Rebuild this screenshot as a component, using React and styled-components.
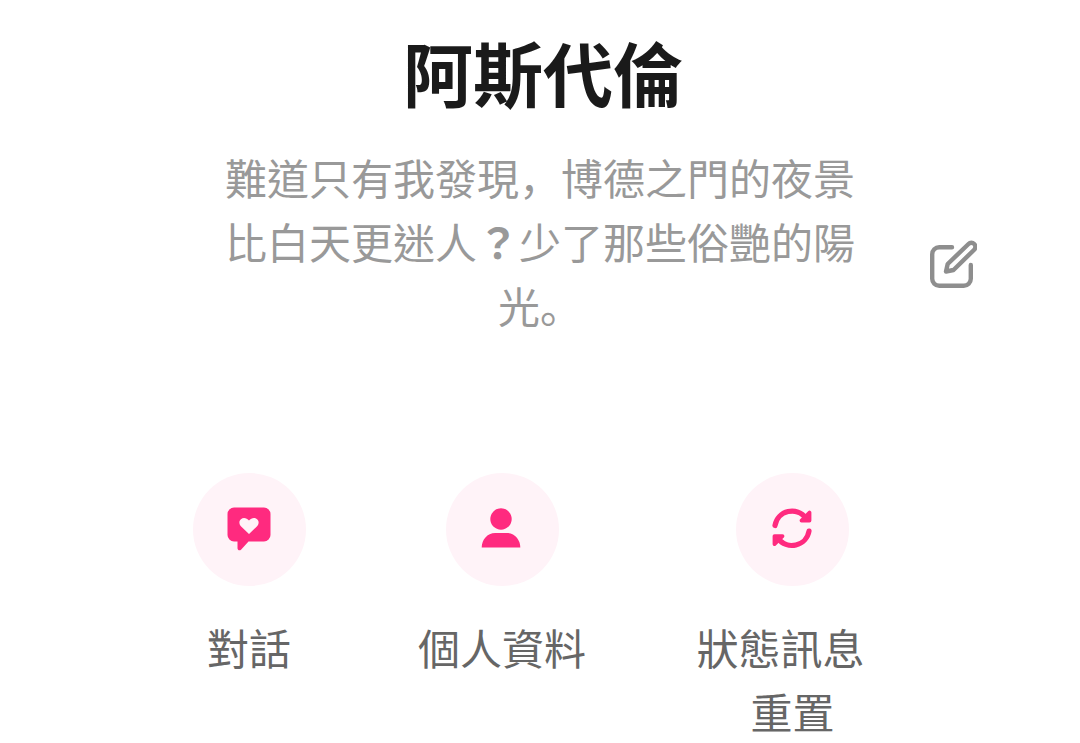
import React from "react";
import styled, { createGlobalStyle } from "styled-components";

const GlobalStyle = createGlobalStyle`
  html, body {
    margin: 0;
    height: 100%;
    background: #fff;
    overflow: hidden;
  }
  body {
    font-family: "Noto Sans CJK TC", "Noto Sans", sans-serif;
  }
`;

function HeartChatIcon() {
  return (
    <svg width="44" height="45" viewBox="0 0 44 45">
      <path
        fill="#ff2a7f"
        d="M7 0.500h30a6.500 6.500 0 0 1 6.500 6.500v21a6.500 6.500 0 0 1-6.500 6.500H21.500l-7.500 8.200c-1.300 1.300-3.500 0.600-3.500-1.400v-6.800H7A6.500 6.500 0 0 1 0.500 28V7A6.500 6.500 0 0 1 7 0.500z"
      />
      <path
        fill="#fff3f8"
        d="M22 27l-7.600-7.200c-2.600-2.500-2.600-5.700-0.500-7.500 2.400-2 5.800-1.400 8.100 1.300 2.300-2.700 5.700-3.300 8.100-1.300 2.100 1.800 2.100 5-0.500 7.500z"
      />
    </svg>
  );
}

function PersonIcon() {
  return (
    <svg width="43" height="44" viewBox="0 0 43 44">
      <circle cx="20" cy="11" r="10.700" fill="#ff2a7f" />
      <path fill="#ff2a7f" d="M0.700 39.500c0-7.500 5.500-14.500 13.500-14.500h11.600c8 0 13.500 7 13.500 14.500z" />
    </svg>
  );
}

function RefreshIcon() {
  return (
    <svg width="44" height="44" viewBox="0 0 44 44" fill="none" stroke="#ff2a7f" strokeWidth="5.200" strokeLinecap="round" strokeLinejoin="round">
      <g>
        <path d="M4 17.500A17.300 17.300 0 0 1 35 10.200" />
        <path d="M38.500 4.500V12.500H30.500Z" fill="#ff2a7f" strokeWidth="3.800" />
      </g>
      <g transform="rotate(180 21 20.300)">
        <path d="M4 17.500A17.300 17.300 0 0 1 35 10.200" />
        <path d="M38.500 4.500V12.500H30.500Z" fill="#ff2a7f" strokeWidth="3.800" />
      </g>
    </svg>
  );
}

function EditIcon() {
  return (
    <svg width="48" height="50" viewBox="0 0 48 50" fill="none" stroke="#8e8e8e" strokeWidth="4.400" strokeLinecap="round" strokeLinejoin="round">
      <path d="M23 8.200H10.200a7 7 0 0 0-7 7v24.600a7 7 0 0 0 7 7h24.600a7 7 0 0 0 7-7V26" />
      <path d="M39.500 5a4 4 0 0 1 5.700 5.700L24.500 31l-7.500 1.500 1.700-7.500z" />
    </svg>
  );
}

export default function App() {
  return (
    <Page>
      <GlobalStyle />
      <Name>阿斯代倫</Name>
      <BioRow>
        <Bio>
          難道只有我發現<Punct>，</Punct>博德之門的夜景比白天更迷人<Question>？</Question>少了那些俗艷的陽光<Punct>。</Punct>
        </Bio>
        <EditButton>
          <EditIcon />
        </EditButton>
      </BioRow>
      <Actions>
        <Action $width={168}>
          <IconCircle>
            <HeartChatIcon />
          </IconCircle>
          <Label>對話</Label>
        </Action>
        <Action $width={168}>
          <IconCircle>
            <PersonIcon />
          </IconCircle>
          <Label>個人資料</Label>
        </Action>
        <Action $width={243}>
          <IconCircle>
            <RefreshIcon />
          </IconCircle>
          <Label>
            <FirstLine>狀態訊息</FirstLine>
            重置
          </Label>
        </Action>
      </Actions>
    </Page>
  );
}

const Page = styled.div`
  height: 743px;
  overflow: hidden;
  background: #fff;
  display: flex;
  flex-direction: column;
  align-items: center;
`;

const Name = styled.h1`
  margin: 22px 0 0 6px;
  font-size: 70px;
  line-height: 100px;
  font-weight: 700;
  color: #1a1a1a;
`;

const BioRow = styled.div`
  position: relative;
  width: 100%;
  margin-top: 23px;
  display: flex;
  justify-content: center;
`;

const Bio = styled.p`
  margin: 0;
  width: 640px;
  font-size: 42px;
  line-height: 64px;
  text-align: center;
  color: #999;
`;

const Punct = styled.span`
  font-family: "Noto Sans CJK SC", sans-serif;
  line-height: 0;
`;

const Question = styled.span`
  font-weight: 700;
  line-height: 0;
`;

const EditButton = styled.div`
  position: absolute;
  left: 929px;
  top: 94px;
  line-height: 0;
`;

const Actions = styled.div`
  align-self: flex-start;
  margin: 136px 0 0 165px;
  display: flex;
  gap: 85px;
`;

const Action = styled.div`
  width: ${(p) => p.$width}px;
  display: flex;
  flex-direction: column;
  align-items: center;
`;

const IconCircle = styled.div`
  width: 113px;
  height: 113px;
  border-radius: 50%;
  background: #fff3f8;
  display: flex;
  align-items: center;
  justify-content: center;
`;

const Label = styled.div`
  margin-top: 29px;
  font-size: 42px;
  line-height: 64px;
  text-align: center;
  color: #666;
`;

const FirstLine = styled.span`
  display: block;
  padding-right: 24px;
`;
